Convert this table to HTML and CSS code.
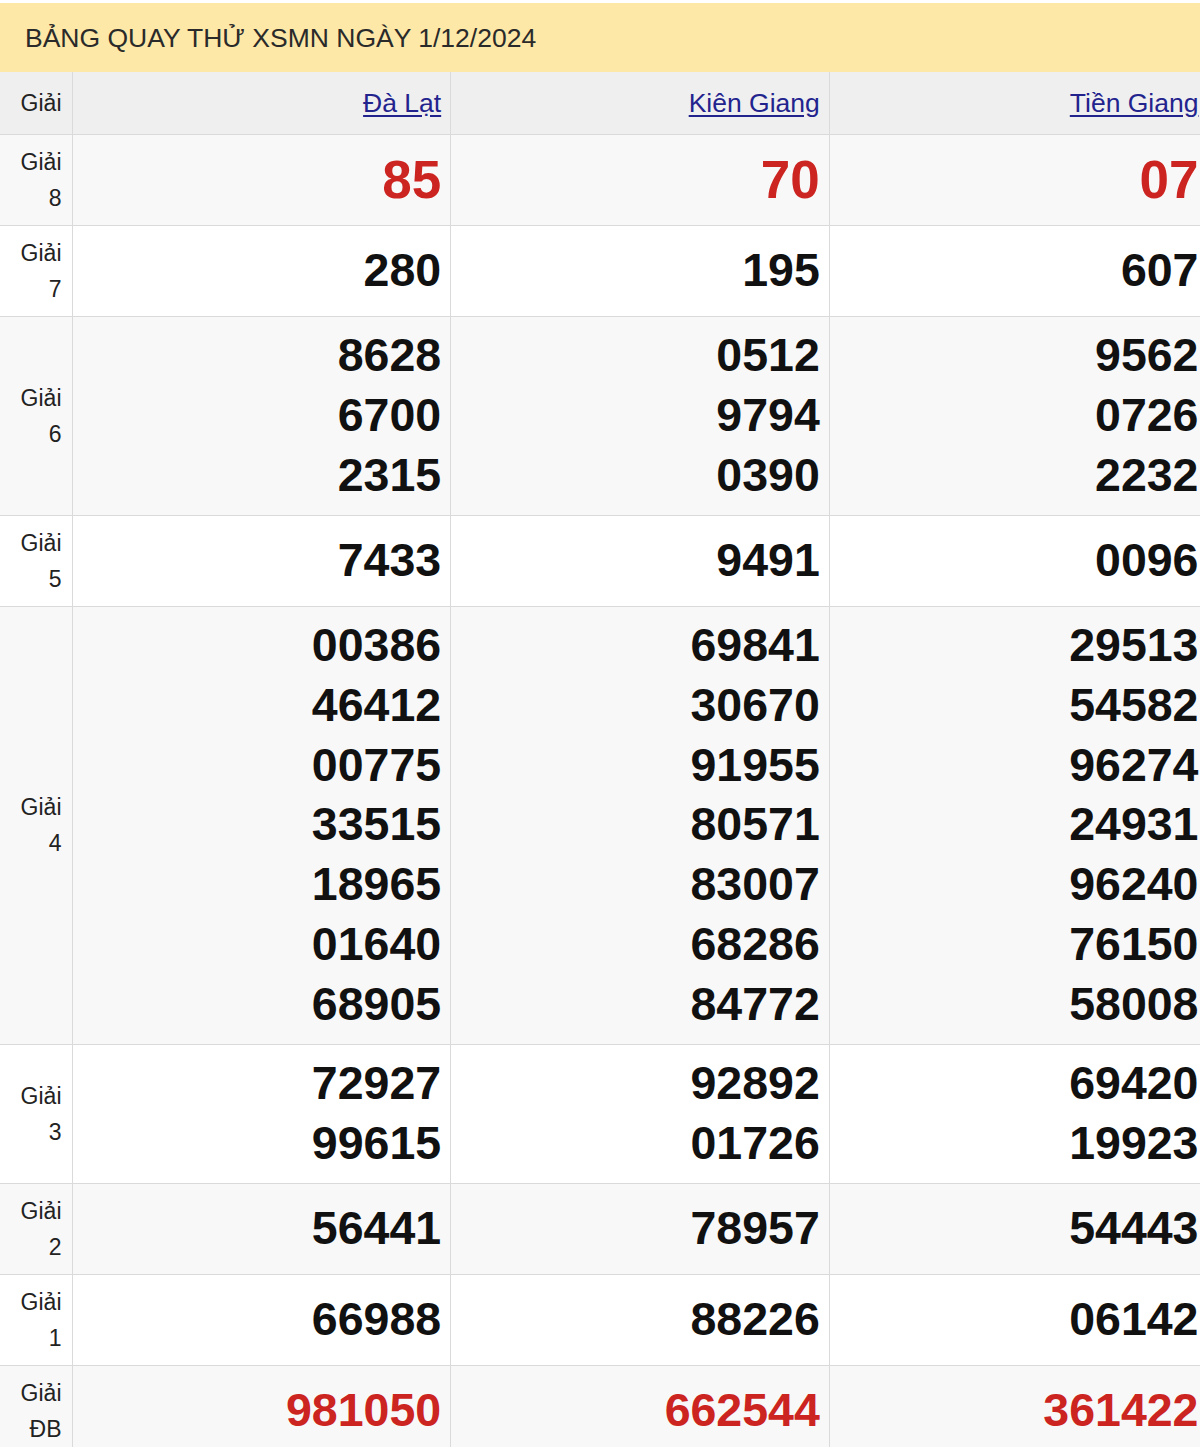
FILE: index.html
```html
<!DOCTYPE html>
<html lang="vi">
<head>
<meta charset="utf-8">
<title>Bảng quay thử XSMN</title>
<link rel="stylesheet" href="styles.css">
</head>
<body>
<div class="wrap">
  <div class="title">BẢNG QUAY THỬ XSMN NGÀY 1/12/2024</div>
  <table class="kq">
    <colgroup>
      <col class="c-label">
      <col class="c-prov">
      <col class="c-prov">
      <col class="c-prov">
    </colgroup>
    <thead>
      <tr>
        <th class="label">Giải</th>
        <th class="prov"><a href="#">Đà Lạt</a></th>
        <th class="prov"><a href="#">Kiên Giang</a></th>
        <th class="prov"><a href="#">Tiền Giang</a></th>
      </tr>
    </thead>
    <tbody>
      <tr class="alt">
        <td class="label">Giải<br>8</td>
        <td class="nums g8"><div>85</div></td>
        <td class="nums g8"><div>70</div></td>
        <td class="nums g8"><div>07</div></td>
      </tr>
      <tr>
        <td class="label">Giải<br>7</td>
        <td class="nums"><div>280</div></td>
        <td class="nums"><div>195</div></td>
        <td class="nums"><div>607</div></td>
      </tr>
      <tr class="alt">
        <td class="label">Giải<br>6</td>
        <td class="nums"><div>8628</div><div>6700</div><div>2315</div></td>
        <td class="nums"><div>0512</div><div>9794</div><div>0390</div></td>
        <td class="nums"><div>9562</div><div>0726</div><div>2232</div></td>
      </tr>
      <tr>
        <td class="label">Giải<br>5</td>
        <td class="nums"><div>7433</div></td>
        <td class="nums"><div>9491</div></td>
        <td class="nums"><div>0096</div></td>
      </tr>
      <tr class="alt">
        <td class="label">Giải<br>4</td>
        <td class="nums"><div>00386</div><div>46412</div><div>00775</div><div>33515</div><div>18965</div><div>01640</div><div>68905</div></td>
        <td class="nums"><div>69841</div><div>30670</div><div>91955</div><div>80571</div><div>83007</div><div>68286</div><div>84772</div></td>
        <td class="nums"><div>29513</div><div>54582</div><div>96274</div><div>24931</div><div>96240</div><div>76150</div><div>58008</div></td>
      </tr>
      <tr>
        <td class="label">Giải<br>3</td>
        <td class="nums"><div>72927</div><div>99615</div></td>
        <td class="nums"><div>92892</div><div>01726</div></td>
        <td class="nums"><div>69420</div><div>19923</div></td>
      </tr>
      <tr class="alt">
        <td class="label">Giải<br>2</td>
        <td class="nums"><div>56441</div></td>
        <td class="nums"><div>78957</div></td>
        <td class="nums"><div>54443</div></td>
      </tr>
      <tr>
        <td class="label">Giải<br>1</td>
        <td class="nums"><div>66988</div></td>
        <td class="nums"><div>88226</div></td>
        <td class="nums"><div>06142</div></td>
      </tr>
      <tr class="alt">
        <td class="label">Giải<br>ĐB</td>
        <td class="nums db"><div>981050</div></td>
        <td class="nums db"><div>662544</div></td>
        <td class="nums db"><div>361422</div></td>
      </tr>
    </tbody>
  </table>
</div>
</body>
</html>
```

FILE: styles.css
```css
html, body {
  margin: 0;
  padding: 0;
  background: #ffffff;
}

body {
  font-family: "Liberation Sans", Arial, sans-serif;
  color: #222;
}

.wrap {
  width: 1200px;
  overflow: hidden;
  padding-top: 3px;
}

.title {
  background: #fde8a7;
  height: 69px;
  line-height: 70px;
  padding-left: 25px;
  font-size: 26.5px;
  color: #2a2a2a;
  white-space: nowrap;
}

.kq {
  width: 1208px;
  border-collapse: collapse;
  table-layout: fixed;
}

.c-label { width: 72px; }
.c-prov { width: 378.67px; }

.kq th,
.kq td {
  border: 1px solid #dadada;
  padding: 9px;
  text-align: right;
  vertical-align: middle;
}

.kq tr > :first-child { border-left: none; }

.kq thead th {
  background: #efefef;
  font-weight: normal;
  line-height: 42px;
  padding-top: 10px;
  padding-bottom: 10px;
  border-top: none;
}

.kq th.label,
.kq td.label {
  font-size: 23px;
  line-height: 36px;
  padding-right: 10px;
  color: #222;
}

.kq th.label {
  line-height: 42px;
}

.prov {
  font-size: 26.5px;
}

.prov a {
  color: #23238e;
  text-decoration: underline;
  text-underline-offset: 3px;
}

.kq tbody tr { background: #ffffff; }
.kq tbody tr.alt { background: #f8f8f8; }

.nums {
  font-weight: bold;
  font-size: 46.5px;
  line-height: 59.9px;
  color: #111;
}

.nums.g8 {
  font-size: 53px;
  color: #cc2420;
}

.nums.db {
  color: #cc2420;
}
```
